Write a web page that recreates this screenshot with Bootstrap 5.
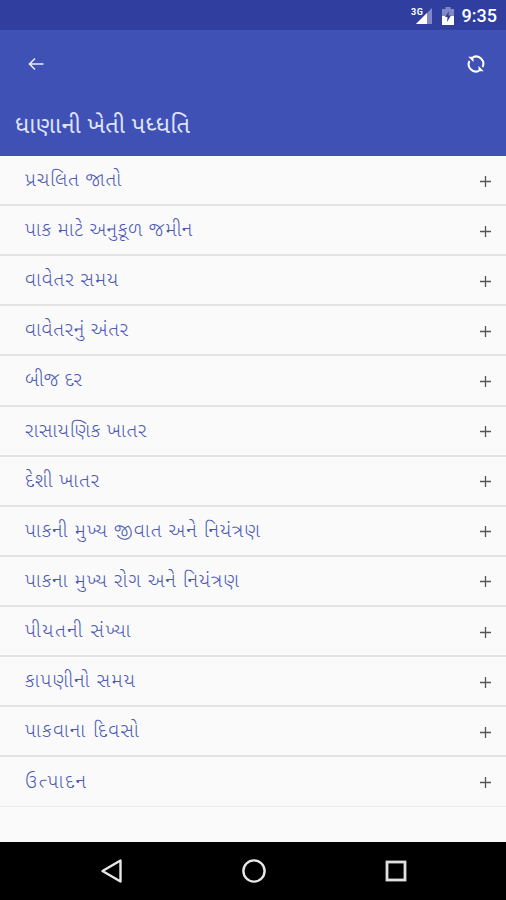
<!DOCTYPE html>
<html lang="gu">
<head>
<meta charset="utf-8">
<meta name="viewport" content="width=device-width, initial-scale=1">
<title>ધાણાની ખેતી પધ્ધતિ</title>
<link href="https://cdn.jsdelivr.net/npm/bootstrap@5.3.0/dist/css/bootstrap.min.css" rel="stylesheet">
<style>
body{background:#fafafa;font-family:"Noto Sans Gujarati","Noto Sans",Roboto,sans-serif;height:900px;overflow:hidden}
.status-strip{height:30px;background:#303f9f;font:500 18px/30px Roboto,sans-serif;padding:2px 9px 0 0}
.app-head{height:126px;background:#3f51b5}
.head-tools{height:68px;padding:0 21px 0 28px}
.page-title{font-size:23.500px;line-height:30px;padding:15px 0 0 15px;font-weight:400;color:#dfe3fc}
.topic-list .topic{height:50.12px;padding:2px 15px 0 25px;background:#fafafa;border-width:0 0 2px;border-color:#e3e3e3;border-radius:0;color:#4a58b4;font-size:19.500px;font-weight:300;line-height:24px}
.topic-list .topic:last-child{border-bottom:1px solid #ececec}
.fit-line{white-space:nowrap}
.topic .fit-line{padding-top:2px}
.sys-nav{height:58px;background:#000;padding:0 99px 0 100px}
</style>
<script src="https://cdn.jsdelivr.net/npm/bootstrap@5.3.0/dist/js/bootstrap.bundle.min.js"></script>
</head>
<body class="d-flex flex-column">
<div class="status-strip d-flex justify-content-end align-items-center text-white flex-shrink-0">
<svg width="24" height="20" viewBox="0 0 24 20" class="me-2"><path d="M22 2v16H6z" fill="#8089c5"/><path d="M17 7v11H6z" fill="#fff"/><text x="1" y="8.500" textLength="12" font-family="Roboto" font-size="9" font-weight="700" fill="#fff">3G</text></svg>
<svg width="12" height="18" viewBox="0 0 12 18" class="me-2"><path d="M0 2h3.500V0h5v2H12v7H0z" fill="#8089c5"/><path d="M0 9h12v9H0z" fill="#fff"/><path d="M7 4 3 10h2.500l-.5 5 4-6.500H6.500z" fill="#303f9f"/></svg>
<span>9:35</span>
</div>
<header class="app-head flex-shrink-0">
<div class="head-tools d-flex justify-content-between align-items-center">
<svg width="16" height="14" viewBox="0 0 16 14" fill="none" stroke="#e8ebff" stroke-width="1.600"><path d="M15.500 7H2M7 1.500 1.500 7 7 12.500"/></svg>
<svg width="18" height="18" viewBox="0 0 18 18" fill="none" stroke="#fff" stroke-width="2"><path d="M6 2.200A7.200 7.200 0 0 1 15.500 12M12 15.800A7.200 7.200 0 0 1 2.500 6"/><path d="M1.200 1.800h5.300v5.300zM16.800 16.200h-5.300v-5.300z" fill="#fff" stroke="none"/></svg>
</div>
<h1 class="page-title m-0"><span class="fit-line" data-width="175">ધાણાની ખેતી પધ્ધતિ</span></h1>
</header>
<main class="topic-list list-group list-group-flush flex-grow-1 rounded-0" id="topics"></main>
<nav class="sys-nav d-flex justify-content-between align-items-center flex-shrink-0">
<svg width="24" height="26" viewBox="0 0 24 26" fill="none" stroke="#e8e8e8" stroke-width="2.400" stroke-linejoin="round"><path d="M20.500 2.500v21L2.500 13z"/></svg>
<svg width="26" height="24" viewBox="0 0 26 24" fill="none" stroke="#e8e8e8" stroke-width="2.400"><circle cx="12" cy="12" r="10.600"/></svg>
<svg width="22" height="22" viewBox="0 0 22 22" fill="none" stroke="#e0e0e0" stroke-width="2.800"><rect x="2" y="2" width="18" height="18"/></svg>
</nav>
<script>
const topics=[["પ્રચલિત જાતો",97],["પાક માટે અનુકૂળ જમીન",168],["વાવેતર સમય",94],["વાવેતરનું અંતર",104],["બીજ દર",57],["રાસાયણિક ખાતર",122],["દેશી ખાતર",75],["પાકની મુખ્ય જીવાત અને નિયંત્રણ",236],["પાકના મુખ્ય રોગ અને નિયંત્રણ",215],["પીયતની સંખ્યા",107],["કાપણીનો સમય",111],["પાકવાના દિવસો",115],["ઉત્પાદન",61]];
document.getElementById("topics").innerHTML=topics.map(([t,w])=>`<div class="topic list-group-item d-flex justify-content-between align-items-center"><span class="fit-line" data-width="${w}">${t}</span><svg width="11" height="11" viewBox="0 0 11 11" stroke="#555" stroke-width="1.300"><path d="M0 5.500h11M5.500 0v11"/></svg></div>`).join("");
// Tracks each line out evenly over its grapheme clusters.
const seg=new Intl.Segmenter("gu",{granularity:"grapheme"});
document.querySelectorAll(".fit-line").forEach(el=>{
  const n=[...seg.segment(el.textContent)].length;
  const gap=(el.dataset.width-el.getBoundingClientRect().width)/n;
  el.style.letterSpacing=gap.toFixed(3)+"px";
});
</script>
</body>
</html>
